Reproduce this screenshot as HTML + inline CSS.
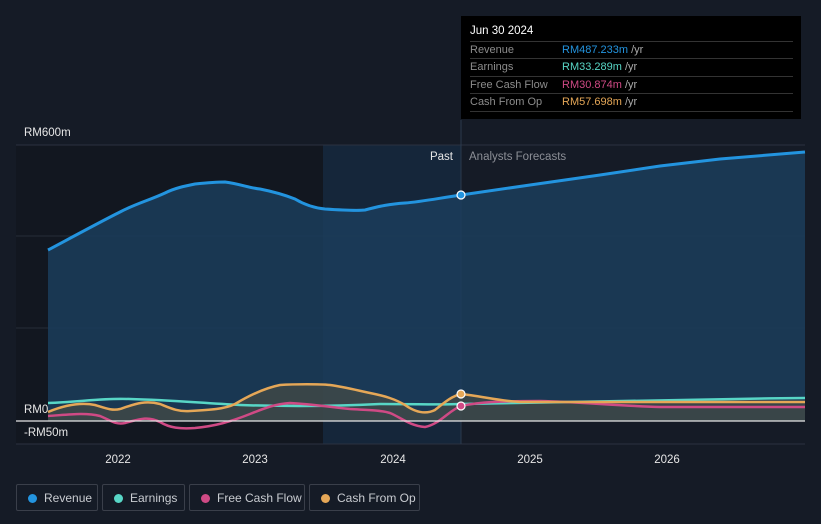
<!DOCTYPE html>
<html><head><style>
body{margin:0;background:#151b26;width:821px;height:524px;overflow:hidden;font-family:"Liberation Sans",sans-serif;}
.t{position:absolute;left:461px;top:16px;width:340px;height:103px;background:#000;color:#fff;font-size:11px}
.t .h{position:absolute;left:9px;top:9px;font-size:11.5px}
.r{position:absolute;left:9px;width:323px;border-top:1px solid #333;height:17px;line-height:17px;color:#8c8c8c}
.r span{position:absolute;left:92px}
.r i{font-style:normal;color:#aaa}
.lg{position:absolute;top:484px;height:27px;border:1px solid #3a3f4a;border-radius:2px;color:#c8cbd0;font-size:12px;line-height:27px;box-sizing:border-box;white-space:nowrap}
.lg b{position:absolute;left:11px;top:9px;width:9px;height:9px;border-radius:50%}
.lg span{position:absolute;left:27px;white-space:nowrap}
</style></head><body>
<svg width="821" height="524" style="position:absolute;left:0;top:0">
<rect x="16" y="145" width="307" height="299" fill="#121720"/>
<rect x="323" y="145" width="138" height="299" fill="#15263a"/>
<line x1="16" y1="145" x2="805" y2="145" stroke="#2c3240"/>
<line x1="16" y1="236" x2="805" y2="236" stroke="#262c38"/>
<line x1="16" y1="328" x2="805" y2="328" stroke="#262c38"/>
<line x1="16" y1="444" x2="805" y2="444" stroke="#2c3240"/>
<line x1="461" y1="120" x2="461" y2="444" stroke="#2c3a4c"/>
<path d="M48,250 C65,241 100,222 120,212 C135,204 150,200 165,193 C175,188 185,186 195,184 C205,183 215,182 225,182 C240,184 250,188 260,189 C275,192 285,195 295,199 C305,205 315,208 325,209 C340,210 355,211 365,210 C380,206 390,204 405,203 C420,202 440,198 461,195 L530,185 L600,175 L660,166 L720,159 L805,152 L805,421 L48,421Z" fill="#1b3d5c" opacity=".85"/>
<path d="M48,250 C65,241 100,222 120,212 C135,204 150,200 165,193 C175,188 185,186 195,184 C205,183 215,182 225,182 C240,184 250,188 260,189 C275,192 285,195 295,199 C305,205 315,208 325,209 C340,210 355,211 365,210 C380,206 390,204 405,203 C420,202 440,198 461,195 L530,185 L600,175 L660,166 L720,159 L805,152" fill="none" stroke="#2394df" stroke-width="3"/>
<path d="M48,412 C65,405 80,402 95,405 C105,408 112,411 120,409 C135,404 145,400 160,404 C170,408 178,412 190,411 C210,410 225,409 235,404 C250,395 265,388 280,385 C295,384 320,384 330,385 C345,387 360,391 370,393 C385,396 395,399 405,405 C415,412 425,415 435,410 C445,402 452,396 461,394 C480,396 500,401 520,402 L805,402 L805,421 L48,421Z" fill="#6a5a3a" opacity=".4"/>
<path d="M48,403 C80,402 100,398 130,399 C170,400 200,403 240,405 C300,407 340,406 380,404 C420,404 440,405 461,404 C600,401 700,399 805,398" fill="none" stroke="#58d6c6" stroke-width="2.5"/>
<path d="M48,416 C65,415 85,412 100,416 C110,420 115,425 125,423 C140,419 148,416 160,422 C170,428 180,429 195,428 C215,426 230,422 250,414 C265,408 275,404 290,403 C310,404 330,407 350,409 C365,410 380,410 390,413 C400,417 410,426 425,427 C440,424 448,411 461,406 C480,402 500,401 540,401 C580,402 620,406 660,407 L805,407" fill="none" stroke="#cf4a85" stroke-width="2.5"/>
<path d="M48,412 C65,405 80,402 95,405 C105,408 112,411 120,409 C135,404 145,400 160,404 C170,408 178,412 190,411 C210,410 225,409 235,404 C250,395 265,388 280,385 C295,384 320,384 330,385 C345,387 360,391 370,393 C385,396 395,399 405,405 C415,412 425,415 435,410 C445,402 452,396 461,394 C480,396 500,401 520,402 L805,402" fill="none" stroke="#e5a757" stroke-width="2.5"/>
<line x1="16" y1="421" x2="805" y2="421" stroke="#e6e6e6" stroke-width="1.2"/>
<circle cx="461" cy="195" r="4" fill="#2394df" stroke="#fff" stroke-width="1.2"/>
<circle cx="461" cy="394" r="4" fill="#e5a757" stroke="#fff" stroke-width="1.2"/>
<circle cx="461" cy="406" r="4" fill="#cf4a85" stroke="#fff" stroke-width="1.2"/>
<g fill="#e6e6e6" font-size="11.5" font-family="Liberation Sans">
<text x="24" y="136">RM600m</text><text x="24" y="413">RM0</text><text x="24" y="436">-RM50m</text>
<text x="118" y="463" text-anchor="middle">2022</text><text x="255" y="463" text-anchor="middle">2023</text><text x="393" y="463" text-anchor="middle">2024</text><text x="530" y="463" text-anchor="middle">2025</text><text x="667" y="463" text-anchor="middle">2026</text>
<text x="453" y="160" text-anchor="end">Past</text><text x="469" y="160" fill="#8c8f96">Analysts Forecasts</text>
</g>
</svg>
<div class="t"><div class="h">Jun 30 2024</div>
<div class="r" style="top:25px">Revenue<span><font color="#2394df">RM487.233m</font> <i>/yr</i></span></div>
<div class="r" style="top:42px">Earnings<span><font color="#58d6c6">RM33.289m</font> <i>/yr</i></span></div>
<div class="r" style="top:60px">Free Cash Flow<span><font color="#cf4a85">RM30.874m</font> <i>/yr</i></span></div>
<div class="r" style="top:77px">Cash From Op<span><font color="#e5a757">RM57.698m</font> <i>/yr</i></span></div>
<div class="r" style="top:95px;height:0"></div>
</div>
<div class="lg" style="left:16px;width:82px"><b style="background:#2394df"></b><span>Revenue</span></div>
<div class="lg" style="left:102px;width:83px"><b style="background:#58d6c6"></b><span>Earnings</span></div>
<div class="lg" style="left:189px;width:116px"><b style="background:#cf4a85"></b><span>Free Cash Flow</span></div>
<div class="lg" style="left:309px;width:111px"><b style="background:#e5a757"></b><span>Cash From Op</span></div>
</body></html>
